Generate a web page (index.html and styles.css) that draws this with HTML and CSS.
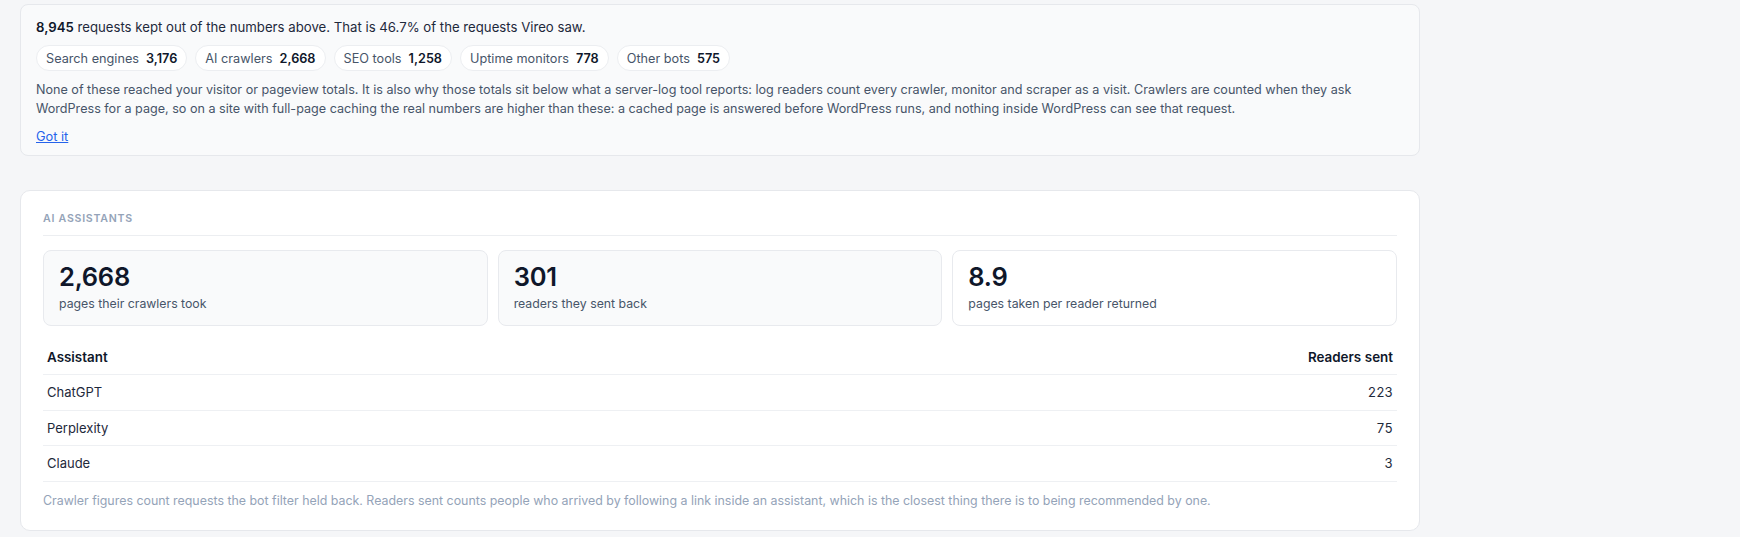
FILE: index.html
```html
<!DOCTYPE html>
<html lang="en">
<head>
<meta charset="utf-8">
<title>Vireo – AI assistants</title>
<link rel="stylesheet" href="styles.css">
</head>
<body>
<div class="wrap">
  <section class="notice">
    <p class="notice-lead"><strong>8,945</strong> requests kept out of the numbers above. That is 46.7% of the requests Vireo saw.</p>
    <ul class="pills">
      <li class="pill"><span class="pill-label">Search engines</span><b class="pill-num">3,176</b></li>
      <li class="pill"><span class="pill-label">AI crawlers</span><b class="pill-num">2,668</b></li>
      <li class="pill"><span class="pill-label">SEO tools</span><b class="pill-num">1,258</b></li>
      <li class="pill"><span class="pill-label">Uptime monitors</span><b class="pill-num">778</b></li>
      <li class="pill"><span class="pill-label">Other bots</span><b class="pill-num">575</b></li>
    </ul>
    <p class="notice-body">None of these reached your visitor or pageview totals. It is also why those totals sit below what a server-log tool reports: log readers count every crawler, monitor and scraper as a visit. Crawlers are counted when they ask WordPress for a page, so on a site with full-page caching the real numbers are higher than these: a cached page is answered before WordPress runs, and nothing inside WordPress can see that request.</p>
    <a class="notice-link" href="#">Got it</a>
  </section>

  <section class="panel">
    <h2 class="panel-title">AI ASSISTANTS</h2>
    <div class="stats">
      <div class="stat">
        <div class="stat-num">2,668</div>
        <div class="stat-label">pages their crawlers took</div>
      </div>
      <div class="stat">
        <div class="stat-num">301</div>
        <div class="stat-label">readers they sent back</div>
      </div>
      <div class="stat stat-plain">
        <div class="stat-num">8.9</div>
        <div class="stat-label">pages taken per reader returned</div>
      </div>
    </div>
    <table class="table">
      <thead>
        <tr><th class="col-name">Assistant</th><th class="col-num">Readers sent</th></tr>
      </thead>
      <tbody>
        <tr><td class="col-name">ChatGPT</td><td class="col-num">223</td></tr>
        <tr><td class="col-name">Perplexity</td><td class="col-num">75</td></tr>
        <tr><td class="col-name">Claude</td><td class="col-num">3</td></tr>
      </tbody>
    </table>
    <p class="panel-foot">Crawler figures count requests the bot filter held back. Readers sent counts people who arrived by following a link inside an assistant, which is the closest thing there is to being recommended by one.</p>
  </section>
</div>
</body>
</html>
```

FILE: styles.css
```css
* { box-sizing: border-box; }

html, body {
  margin: 0;
  padding: 0;
  background: #f5f6f8;
}

body {
  font-family: Inter, "Noto Sans", "Liberation Sans", sans-serif;
  font-size: 13px;
  line-height: 19px;
  color: #1e293b;
}

.wrap {
  width: 1400px;
  margin: 4px 0 0 20px;
  display: flex;
  flex-direction: column;
  gap: 34px;
}

/* Notice card */
.notice {
  background: #f9fafb;
  border: 1px solid #e6e8ec;
  border-radius: 8px;
  padding: 13px 15px 9px;
  display: flex;
  flex-direction: column;
  align-items: flex-start;
}

.notice-lead {
  margin: 0;
  font-size: 13.2px;
  color: #1e293b;
}

.notice-lead strong {
  font-weight: 600;
  color: #0f172a;
}

.pills {
  list-style: none;
  margin: 8px 0 0;
  padding: 0;
  display: flex;
  gap: 8px;
}

.pill {
  display: flex;
  align-items: center;
  gap: 7px;
  height: 26px;
  padding: 0 9px;
  background: #ffffff;
  border: 1px solid #eceef1;
  border-radius: 13px;
  font-size: 12.7px;
}

.pill-label { color: #475569; }

.pill-num {
  font-weight: 600;
  color: #0f172a;
}

.notice-body {
  margin: 9px 0 0;
  color: #475569;
  font-size: 12.6px;
}

.notice-link {
  margin-top: 9px;
  color: #2563eb;
  text-decoration: underline;
  font-size: 12.8px;
}

/* Panel */
.panel {
  background: #ffffff;
  border: 1px solid #e6e8ec;
  border-radius: 10px;
  padding: 20px 22px 20px;
}

.panel-title {
  margin: 0;
  padding-bottom: 8px;
  border-bottom: 1px solid #eceef1;
  font-size: 10.6px;
  line-height: 16px;
  font-weight: 600;
  letter-spacing: 0.07em;
  color: #94a3b8;
}

.stats {
  margin-top: 14px;
  display: grid;
  grid-template-columns: repeat(3, 1fr);
  gap: 10px;
}

.stat {
  background: #f9fafb;
  border: 1px solid #e8eaee;
  border-radius: 8px;
  padding: 11px 15px 12px;
}

.stat-plain { background: #ffffff; }

.stat-num {
  font-size: 25.5px;
  line-height: 30px;
  font-weight: 600;
  color: #0f172a;
  letter-spacing: -0.01em;
}

.stat-label {
  margin-top: 3px;
  font-size: 12.3px;
  line-height: 18px;
  color: #475569;
}

.table {
  width: 100%;
  margin-top: 14px;
  border-collapse: collapse;
}

.table th,
.table td {
  padding: 8px 4px;
  border-bottom: 1px solid #eef0f3;
  font-size: 13px;
  line-height: 18.4px;
}

.table th {
  font-weight: 600;
  font-size: 13.4px;
  color: #0f172a;
}

.table td { color: #1e293b; }

.col-name { text-align: left; }

.col-num {
  text-align: right;
  font-variant-numeric: tabular-nums;
}

.panel-foot {
  margin: 10px 0 0;
  font-size: 12.4px;
  line-height: 18px;
  color: #94a3b8;
}
```
